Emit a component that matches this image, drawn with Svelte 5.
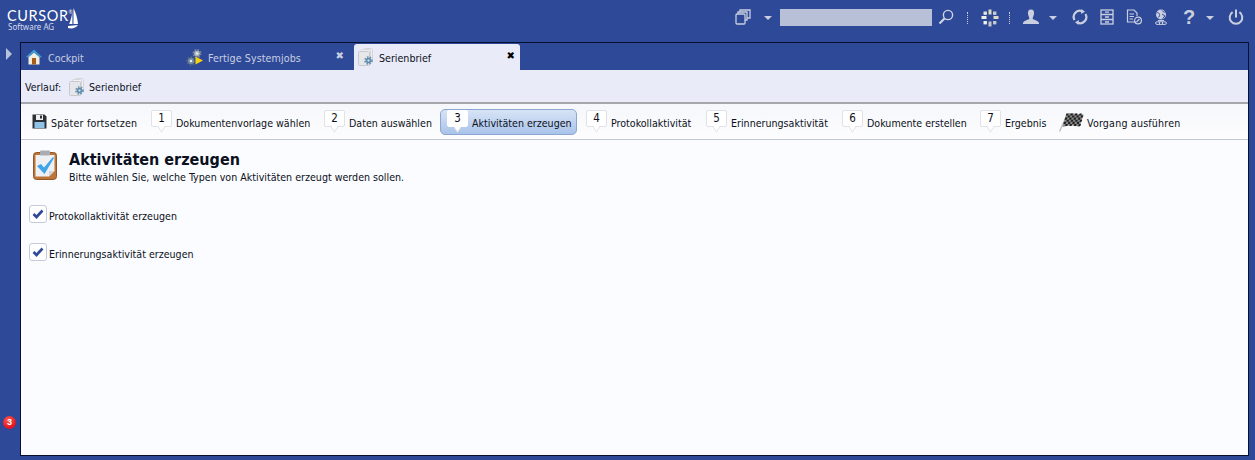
<script>
  const steps = [
    { n: 1, label: 'Dokumentenvorlage wählen', w: 134 },
    { n: 2, label: 'Daten auswählen', w: 84 },
    { n: 3, label: 'Aktivitäten erzeugen', w: 100, active: true },
    { n: 4, label: 'Protokollaktivität', w: 81 },
    { n: 5, label: 'Erinnerungsaktivität', w: 97 },
    { n: 6, label: 'Dokumente erstellen', w: 99 },
    { n: 7, label: 'Ergebnis', w: 42 }
  ];
  const checks = ['Protokollaktivität erzeugen', 'Erinnerungsaktivität erzeugen'];
  const flagCells = [];
  for (let r = 0; r < 6; r++) for (let c = 0; c < 8; c++) if ((r + c) % 2 === 0) flagCells.push([c, r]);
</script>

{#snippet gear(cx, cy, r, fill, rim)}
  <circle {cx} {cy} r={r} fill={fill}/>
  <circle {cx} {cy} r={r + 0.7} fill="none" stroke={rim} stroke-width="1.6" stroke-dasharray="1.6 1.3"/>
  <circle {cx} {cy} r={r * 0.4} fill="#e6ecf2"/>
{/snippet}

{#snippet docIcon()}
  <svg class="doc" viewBox="0 0 16 18" width="16" height="18">
    <rect x="6.5" y="0.5" width="8" height="13" rx="1" fill="#eceef0" stroke="#d4d6da"/>
    <rect x="3.5" y="1.5" width="9" height="14" rx="1" fill="#f0f1f3" stroke="#d4d6da"/>
    <rect x="0.5" y="3.5" width="11" height="14" rx="1" fill="#e6e7ea" stroke="#c6c8cd"/>
    {@render gear(10.5, 12.5, 2.8, '#5f8cae', '#6b8fab')}
  </svg>
{/snippet}

<div class="page">
  <header class="top">
    <div class="logo">
      <div class="logo-text">
        <span class="brand">CURSOR<sup>®</sup></span>
        <span class="sub">Software AG</span>
      </div>
      <svg class="sail" viewBox="0 0 10 21" width="10" height="21">
        <path d="M5.5 0 C8 5 9.5 11 10 16 L5.5 16Z M4.4 4 L4.4 16 L1.2 16 C2.8 12 3.8 8 4.4 4Z M0 18 L10 17 C8 20 4 21 0 20Z" fill="#fff"/>
      </svg>
    </div>
    <div class="tools">
      <svg class="i1" viewBox="0 0 16 16" width="16" height="16" fill="none" stroke="#c9cfdf" stroke-width="1.3">
        <rect x="1" y="5" width="9" height="10" rx="1"/><path d="M3 5 V3 H12 V11 H10 M5 3 V1 H15 V9 H12"/>
      </svg>
      <span class="caret c1"></span>
      <div class="search"></div>
      <svg class="i2" viewBox="0 0 16 16" width="16" height="16" fill="none" stroke="#d0d5e3">
        <circle cx="10" cy="6" r="4.6" stroke-width="1.4"/><path d="M6.5 9.5 L1.5 14.5" stroke-width="2.2"/>
      </svg>
      <span class="sep s1"></span>
      <svg class="i3" viewBox="0 0 18 18" width="18" height="18" fill="#dcdcc8">
        <rect x="7.5" y="0.5" width="3" height="5"/><rect x="7.5" y="12.5" width="3" height="5" fill="#c4c8cc"/>
        <rect x="0.5" y="7" width="5" height="3" fill="#f0f0e0"/><rect x="12.5" y="7" width="5" height="3"/>
        <rect x="2.5" y="2.5" width="3.4" height="3.4" fill="#e6e6d4"/><rect x="12" y="2.5" width="3.4" height="3.4" fill="#c8ccc8"/>
        <rect x="2.5" y="12" width="3.4" height="3.4" fill="#f0f0f0"/><rect x="12" y="12" width="3.4" height="3.4" fill="#c4c8cc"/>
      </svg>
      <span class="sep s2"></span>
      <svg class="i4" viewBox="0 0 16 16" width="16" height="16" fill="#c9cfdf">
        <path d="M8 0.5 C10.5 0.5 11.4 2.5 11 5 C10.7 7 9.8 8.2 9.6 9.5 C10 11 15 11.2 16 14 V15 H0 V14 C1 11.2 6 11 6.4 9.5 C6.2 8.2 5.3 7 5 5 C4.6 2.5 5.5 0.5 8 0.5Z"/>
      </svg>
      <span class="caret c2"></span>
      <svg class="i5" viewBox="0 0 16 16" width="16" height="16" fill="none" stroke="#c9cfdf" stroke-width="2.2">
        <path d="M2.6 11 A6 6 0 0 1 10 2.3 M13.4 5 A6 6 0 0 1 6 13.7"/>
        <path d="M9.5 0 L13 2.8 L9 5Z M6.5 16 L3 13.2 L7 11Z" fill="#c9cfdf" stroke="none"/>
      </svg>
      <svg class="i6" viewBox="0 0 14 16" width="14" height="16" fill="none" stroke="#c9cfdf" stroke-width="1.3">
        <rect x="1" y="1" width="12" height="14"/><path d="M1 5.5 H13 M1 10.5 H13 M5 3.2 H9 M5 8 H9 M5 13 H9"/>
      </svg>
      <svg class="i7" viewBox="0 0 16 16" width="16" height="16" fill="none" stroke="#c9cfdf" stroke-width="1.2">
        <path d="M10 13 H1.5 V1 H8 L11 4 V7 M3.5 5 H8 M3.5 7.5 H8 M3.5 10 H7"/>
        <circle cx="12" cy="11.5" r="3.4"/><path d="M10.5 13 L13.5 10"/>
      </svg>
      <svg class="i8" viewBox="0 0 12 16" width="12" height="16">
        <circle cx="6" cy="5.5" r="5" fill="#c9cfdf"/>
        <path d="M1.6 4 C3 3 4 4 4.5 5.5 C5 7 4 8 3 8.5 M7 1.5 C8 3 9.5 3 10.6 3.5 M7 5 L10 7 L7.5 9.5" fill="none" stroke="#2e4998" stroke-width="1"/>
        <rect x="3" y="11" width="6" height="1" fill="#c9cfdf"/>
        <rect x="0.6" y="12.8" width="10.8" height="2.6" rx="1.3" fill="none" stroke="#c9cfdf"/>
        <path d="M4.5 13 V15.2 M7.5 13 V15.2" stroke="#c9cfdf"/>
      </svg>
      <span class="help">?</span>
      <span class="caret c3"></span>
      <svg class="i9" viewBox="0 0 16 16" width="16" height="16" fill="none" stroke="#c9cfdf" stroke-width="2">
        <path d="M4.6 3.2 A6.3 6.3 0 1 0 11.4 3.2 M8 0.5 V8.5"/>
      </svg>
    </div>
  </header>

  <div class="body">
    <aside class="rail">
      <span class="expand"></span>
      <span class="badge">3</span>
    </aside>
    <main class="frame">
      <nav class="tabs">
        <div class="tab">
          <svg viewBox="0 0 16 16" width="16" height="16">
            <path d="M2.5 8 L8 3.5 L13.5 8 V15.5 H2.5Z" fill="#f3efdf"/>
            <path d="M8 0.5 L16 8 L14 8.5 L8 3.5 L2 8.5 L0 8 Z" fill="#3f9bd2"/>
            <rect x="6" y="9" width="4" height="6.5" fill="#a85c1c"/>
          </svg>
          <span class="tab-label">Cockpit</span>
        </div>
        <div class="tab">
          <svg viewBox="0 0 17 17" width="17" height="17">
            {@render gear(5, 12, 3.2, '#6f8ba3', '#566b7e')}
            {@render gear(11, 4.5, 3, '#a7b2bd', '#7d8a96')}
            <path d="M9.5 7.5 L17 11.5 L9.5 15.5Z" fill="#f5d20a"/>
          </svg>
          <span class="tab-label sys">Fertige Systemjobs</span>
          <b class="x">✖</b>
        </div>
        <div class="tab on">
          {@render docIcon()}
          <span class="tab-label">Serienbrief</span>
          <b class="x">✖</b>
        </div>
      </nav>

      <div class="crumbs">
        <span class="crumb-label">Verlauf:</span>
        {@render docIcon()}
        <span>Serienbrief</span>
      </div>

      <div class="toolbar">
        <div class="item save">
          <svg viewBox="0 0 15 15" width="15" height="15">
            <path d="M0.5 0.5 H12.5 L14.5 2.5 V14.5 H0.5Z" fill="#2b3036"/>
            <rect x="4" y="1" width="7" height="5" fill="#eef0f2"/>
            <rect x="8" y="1.5" width="2" height="3" fill="#2b3036"/>
            <rect x="2.5" y="8" width="10" height="6" fill="#8fc3e6"/>
          </svg>
          <span class="label later" style:width="86px">Später fortsetzen</span>
        </div>
        {#each steps as s}
          <div class="item step" class:active={s.active}>
            <span class="bubble">{s.n}</span>
            <span class="label" style:width="{s.w}px">{s.label}</span>
          </div>
        {/each}
        <div class="item run">
          <svg viewBox="0 0 25 20" width="25" height="20">
            <path d="M0.5 19.5 L7.5 4" stroke="#bcbcbc" stroke-width="1.4"/>
            <path d="M7 3 C11 -0.5 16 2.5 24.5 2.5 L20.5 15 C14 13 9 13 3.5 15Z" fill="#8a8a8a"/>
            <g fill="#1f1f1f" transform="translate(6 1.4) skewX(-16)">
              {#each flagCells as [c, r]}<rect x={c * 2.2 + 1.4} y={r * 2.1} width="2.2" height="2.1"/>{/each}
            </g>
          </svg>
          <span class="label later" style:width="92px">Vorgang ausführen</span>
        </div>
      </div>

      <section class="content">
        <div class="head">
          <svg viewBox="0 0 24 30" width="24" height="30">
            <rect x="0.5" y="2.5" width="23" height="27" rx="3" fill="#bd7438" stroke="#935626"/>
            <path d="M2.5 5 H21.5 V21 L16 26.5 H2.5Z" fill="#eef0f4"/>
            <path d="M21.5 21 L16 26.5 V21Z" fill="#cfd2d8"/>
            <rect x="7" y="0.5" width="10" height="5" rx="1" fill="#a9adb3"/>
            <path d="M4 16 L8 14 L11 17.5 L20 7 L21 8 L11.5 24 Z" fill="#3fa5e6"/>
          </svg>
          <div>
            <h1>Aktivitäten erzeugen</h1>
            <p>Bitte wählen Sie, welche Typen von Aktivitäten erzeugt werden sollen.</p>
          </div>
        </div>
        {#each checks as c}
          <div class="check">
            <span class="box">
              <svg viewBox="0 0 12 10" width="12" height="10"><path d="M1.5 5 L4.5 8 L10.5 1.5" fill="none" stroke="#2e4998" stroke-width="2.6"/></svg>
            </span>
            <span class="check-label">{c}</span>
          </div>
        {/each}
      </section>
    </main>
  </div>
</div>

<style>
  :global(body) { margin: 0; background: #2e4998; }
  .page { width: 1255px; height: 460px; display: flex; flex-direction: column; overflow: hidden; background: #2e4998; font: 10.6px/14px "DejaVu Sans Condensed", "DejaVu Sans", sans-serif; font-stretch: condensed; color: #0c1020; }
  .top { height: 42px; flex: none; display: flex; justify-content: space-between; }
  .logo { display: flex; padding: 8px 0 0 7px; color: #fff; }
  .logo-text { display: flex; flex-direction: column; width: 61px; }
  .brand { font: 14.5px/15px "Lato", sans-serif; letter-spacing: 0.6px; white-space: nowrap; }
  .brand sup { font-size: 5px; line-height: 0; vertical-align: 7px; letter-spacing: 0; }
  .sub { font: 8px/8px "Noto Sans", sans-serif; color: #d6dcec; font-stretch: normal; padding-left: 1px; }
  .tools { display: flex; align-items: flex-start; padding-top: 9px; }
  .tools > * { flex: none; }
  .caret { width: 0; height: 0; border: 4px solid transparent; border-top: 4px solid #c9cfdf; border-bottom: 0; margin-top: 7px; }
  .c1 { margin-left: 13px; }
  .search { width: 152px; height: 17px; background: #b8c0d8; margin-left: 8px; }
  .i2 { margin-left: 6px; }
  .sep { width: 0; height: 12px; border-left: 1px dotted #c9cfdf; margin-top: 3px; }
  .s1 { margin-left: 13px; }
  .i3 { margin-left: 13px; }
  .s2 { margin-left: 10px; }
  .i4 { margin-left: 13px; }
  .c2 { margin-left: 10px; }
  .i5 { margin-left: 15px; }
  .i6 { margin-left: 12px; }
  .i7 { margin-left: 12px; }
  .i8 { margin-left: 13px; }
  .help { width: 10px; margin-left: 16px; font: 700 20px/17px "Liberation Sans", sans-serif; color: #c9cfdf; text-align: center; }
  .c3 { margin-left: 13px; }
  .i9 { margin: 0 11px 0 14px; }

  .body { flex: 1; display: flex; min-height: 0; padding-bottom: 4px; }
  .rail { width: 20px; flex: none; position: relative; }
  .expand { position: absolute; left: 6px; top: 6px; border-left: 6px solid #b8c2dd; border-top: 6px solid transparent; border-bottom: 6px solid transparent; }
  .badge { position: absolute; left: 3px; top: 374px; width: 13px; height: 13px; border-radius: 50%; background: radial-gradient(circle at 40% 30%, #ff5a50, #e1121c 70%); color: #fff; font: 700 9px/13px "Liberation Sans", sans-serif; text-align: center; }

  .frame { width: 1229px; flex: none; box-sizing: border-box; display: flex; flex-direction: column; border: 1px solid #071030; background: #fbfcff; }
  .tabs { height: 27px; flex: none; box-sizing: border-box; padding-top: 1px; display: flex; background: #2e4998; color: #c9cfe2; }
  .tab { width: 166px; padding: 0 0 0 5px; box-sizing: border-box; display: flex; align-items: center; gap: 6px; position: relative; }
  .tab:nth-child(2) { margin-left: -6px; gap: 5px; }
  .tab-label { padding-top: 2px; }
  .sys { letter-spacing: 0.1px; }
  .tab.on { margin-left: 7px; padding-left: 4px; background: #e9ebf9; color: #0c1020; border-radius: 3px 3px 0 0; gap: 5px; }
  .tab svg { flex: none; }
  .x { position: absolute; right: 3px; top: 5px; font: 700 10px/14px "DejaVu Sans", sans-serif; color: #c9cfe2; }
  .on .x { color: #000; right: 5px; }
  .crumbs { height: 34px; flex: none; box-sizing: border-box; display: flex; align-items: center; padding: 1px 0 0 4px; background: #e9ebf9; border-bottom: 2px solid #a5a7ad; }
  .crumb-label { width: 44px; flex: none; }
  .crumbs .doc { margin-right: 4px; }
  .toolbar { height: 36px; flex: none; display: flex; align-items: center; gap: 2px; padding-left: 4px; background: linear-gradient(#f6f7fb, #fdfdfe); border-bottom: 1px solid #c2c8d8; box-sizing: border-box; }
  .item { height: 26px; display: flex; align-items: center; padding: 0 4px 0 6px; box-sizing: border-box; border: 1px solid transparent; border-radius: 5px; white-space: nowrap; }
  .label { flex: none; padding-top: 3px; }
  .later { letter-spacing: 0.2px; }
  .save { gap: 4px; }
  .step { gap: 4px; }
  .active { background: linear-gradient(#d8e4f6, #a9c3ea); border-color: #8ba6d0; }
  .bubble { width: 21px; height: 17px; margin-top: -7px; position: relative; background: #fff; border: 1px solid #e0e2e6; border-radius: 2px; box-sizing: border-box; text-align: center; font-size: 11.5px; line-height: 14px; color: #0c1020; }
  .bubble::after { content: ""; position: absolute; left: 6px; top: 13px; width: 6px; height: 6px; background: #fff; border-right: 1px solid #e0e2e6; border-bottom: 1px solid #e0e2e6; transform: scaleX(.7) rotate(45deg); }
  .active .bubble { border-color: #fff; }
  .run { gap: 3px; margin-left: -2px; }
  .content { flex: 1; background: #fbfcff; padding: 10px 0 0 12px; }
  .head { display: flex; gap: 12px; }
  h1 { margin: 0; font: 700 16px/19px "DejaVu Sans Condensed", "DejaVu Sans", sans-serif; font-stretch: condensed; color: #0c1020; }
  p { margin: 2px 0 0; line-height: 13px; }
  .check { display: flex; align-items: center; gap: 2px; height: 18px; margin: 0 0 20px -4px; }
  .head + .check { margin-top: 21px; }
  .check-label { padding-top: 3px; }
  .box { width: 18px; height: 18px; box-sizing: border-box; border: 1px solid #c4cbdc; border-radius: 3px; background: #fff; display: flex; align-items: center; justify-content: center; }
</style>
